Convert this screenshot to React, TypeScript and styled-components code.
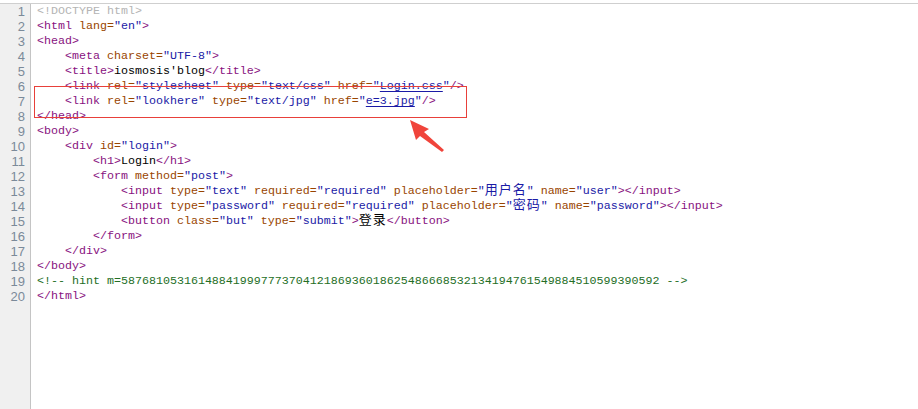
import React from "react";
import styled, { createGlobalStyle } from "styled-components";

const Global = createGlobalStyle`
  html, body { margin: 0; padding: 0; background: #ffffff; }
  body { overflow: hidden; }
`;

type Kind = "doc" | "tag" | "attr" | "val" | "link" | "text" | "cjk" | "cjkv" | "com" | "sp";
type Tok = [Kind, string];

const colors: Record<Kind, string> = {
  doc: "#b4b4b4",
  tag: "#881280",
  attr: "#994500",
  val: "#1a1aa6",
  link: "#1a1aa6",
  text: "#000000",
  cjk: "#000000",
  cjkv: "#1a1aa6",
  com: "#236e25",
  sp: "#000000",
};

const isCjk = (k: Kind) => k === "cjk" || k === "cjkv";

const Editor = styled.div`
  position: relative;
  display: flex;
  height: 406px;
  margin-top: 3px;
  border-top: 1px solid #cfcfcf;
  font-family: "Liberation Mono", "DejaVu Sans Mono", monospace;
  font-size: 11.67px;
  line-height: 15px;
`;

const Gutter = styled.div`
  width: 25px;
  padding-right: 5px;
  background: #f0f0f0;
  border-right: 1px solid #c4c4c4;
  display: flex;
  flex-direction: column;
  align-items: flex-end;
`;

const LineNo = styled.div`
  height: 15px;
  color: #7b8a99;
  font-family: "Liberation Sans", Arial, sans-serif;
  font-size: 13px;
`;

const Code = styled.div`
  flex: 1;
  padding-left: 6px;
  display: flex;
  flex-direction: column;
`;

const Row = styled.div`
  height: 15px;
  white-space: pre;
`;

const Span = styled.span<{ $k: Kind }>`
  color: ${(p) => colors[p.$k]};
  text-decoration: ${(p) => (p.$k === "link" ? "underline" : "none")};
  text-underline-offset: 2px;
`;

const CjkSpan = styled.span<{ $k: Kind }>`
  line-height: 8px;
  color: ${(p) => colors[p.$k]};
  font-family: "Noto Sans CJK SC", sans-serif;
  font-size: 13px;
  letter-spacing: 1px;
`;

const Highlight = styled.div`
  position: absolute;
  left: 34px;
  top: 82px;
  width: 431px;
  height: 30px;
  border: 1px solid #e8403a;
  pointer-events: none;
`;

const Arrow = styled.svg`
  position: absolute;
  left: 400px;
  top: 108px;
  width: 50px;
  height: 45px;
  overflow: visible;
`;

const s4 = "    ";
const s8 = "        ";
const s12 = "            ";

const lines: Tok[][] = [
  [["doc", "<!DOCTYPE html>"]],
  [["tag", "<html"], ["attr", " lang="], ["val", '"en"'], ["tag", ">"]],
  [["tag", "<head>"]],
  [["sp", s4], ["tag", "<meta"], ["attr", " charset="], ["val", '"UTF-8"'], ["tag", ">"]],
  [["sp", s4], ["tag", "<title>"], ["text", "iosmosis'blog"], ["tag", "</title>"]],
  [
    ["sp", s4], ["tag", "<link"], ["attr", " rel="], ["val", '"stylesheet"'],
    ["attr", " type="], ["val", '"text/css"'], ["attr", " href="], ["val", '"'],
    ["link", "Login.css"], ["val", '"'], ["tag", "/>"],
  ],
  [
    ["sp", s4], ["tag", "<link"], ["attr", " rel="], ["val", '"lookhere"'],
    ["attr", " type="], ["val", '"text/jpg"'], ["attr", " href="], ["val", '"'],
    ["link", "e=3.jpg"], ["val", '"'], ["tag", "/>"],
  ],
  [["tag", "</head>"]],
  [["tag", "<body>"]],
  [["sp", s4], ["tag", "<div"], ["attr", " id="], ["val", '"login"'], ["tag", ">"]],
  [["sp", s8], ["tag", "<h1>"], ["text", "Login"], ["tag", "</h1>"]],
  [["sp", s8], ["tag", "<form"], ["attr", " method="], ["val", '"post"'], ["tag", ">"]],
  [
    ["sp", s12], ["tag", "<input"], ["attr", " type="], ["val", '"text"'],
    ["attr", " required="], ["val", '"required"'], ["attr", " placeholder="],
    ["val", '"'], ["cjkv", "用户名"], ["val", '"'], ["attr", " name="], ["val", '"user"'],
    ["tag", "></input>"],
  ],
  [
    ["sp", s12], ["tag", "<input"], ["attr", " type="], ["val", '"password"'],
    ["attr", " required="], ["val", '"required"'], ["attr", " placeholder="],
    ["val", '"'], ["cjkv", "密码"], ["val", '"'], ["attr", " name="], ["val", '"password"'],
    ["tag", "></input>"],
  ],
  [
    ["sp", s12], ["tag", "<button"], ["attr", " class="], ["val", '"but"'],
    ["attr", " type="], ["val", '"submit"'], ["tag", ">"], ["cjk", "登录"], ["tag", "</button>"],
  ],
  [["sp", s8], ["tag", "</form>"]],
  [["sp", s4], ["tag", "</div>"]],
  [["tag", "</body>"]],
  [["com", "<!-- hint m=58768105316148841999777370412186936018625486668532134194761549884510599390592 -->"]],
  [["tag", "</html>"]],
];

export default function App() {
  return (
    <>
      <Global />
      <Editor>
        <Gutter>
          {lines.map((_, i) => (
            <LineNo key={i}>{i + 1}</LineNo>
          ))}
        </Gutter>
        <Code>
          {lines.map((toks, i) => (
            <Row key={i}>
              {toks.map(([k, t], j) =>
                isCjk(k) ? (
                  <CjkSpan key={j} $k={k}>
                    {t}
                  </CjkSpan>
                ) : (
                  <Span key={j} $k={k}>
                    {t}
                  </Span>
                )
              )}
            </Row>
          ))}
        </Code>
        <Highlight />
        <Arrow viewBox="0 0 50 45">
          <polygon
            points="10,8 29,17 24,20 44,38 42,40 20,24 16,28"
            fill="#f0443b"
          />
        </Arrow>
      </Editor>
    </>
  );
}
